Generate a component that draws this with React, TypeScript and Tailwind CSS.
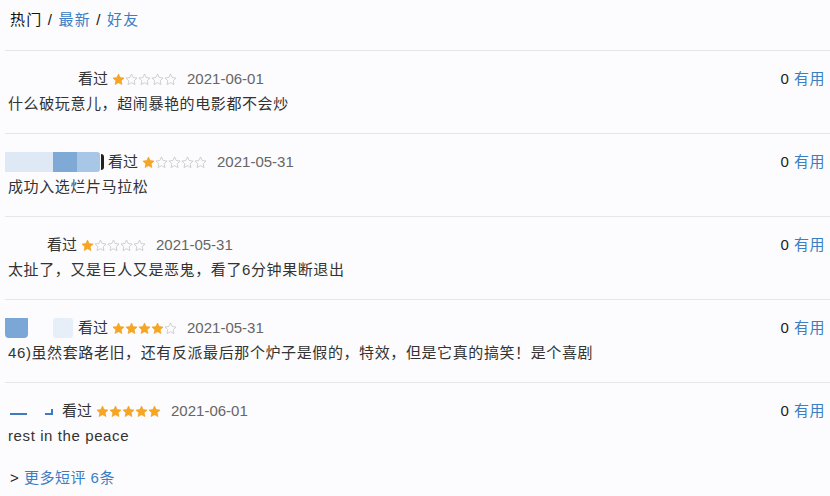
import React from "react";

const FONT = { fontFamily: '"Liberation Sans", "Noto Sans CJK SC", sans-serif' };

function Star({ filled }: { filled: boolean }) {
  return (
    <svg width="13" height="13" viewBox="0 0 24 24" className="shrink-0">
      <path
        d="M12 1.8l3.1 6.6 7.2.9-5.3 5 1.4 7.1L12 17.9l-6.4 3.5 1.4-7.1-5.3-5 7.2-.9z"
        fill={filled ? "#f6a623" : "none"}
        stroke={filled ? "#f19a12" : "#c9c9c9"}
        strokeWidth={filled ? 1 : 1.6}
        strokeLinejoin="round"
      />
    </svg>
  );
}

function Stars({ n }: { n: number }) {
  return (
    <span className="flex items-center">
      {[0, 1, 2, 3, 4].map((i) => (
        <Star key={i} filled={i < n} />
      ))}
    </span>
  );
}

type Row = {
  name: React.ReactNode;
  stars: number;
  date: string;
  text: string;
};

const rows: Row[] = [
  {
    name: <span className="w-[73px]" />,
    stars: 1,
    date: "2021-06-01",
    text: "什么破玩意儿，超闹暴艳的电影都不会炒",
  },
  {
    name: (
      <span className="flex items-center w-[103px] h-[20px]">
        <span className="w-[48px] h-[20px] bg-[#dfe9f5]" />
        <span className="w-[24px] h-[20px] bg-[#7faad6]" />
        <span className="w-[23px] h-[20px] bg-[#a8c7e6] rounded-r-[3px]" />
        <span className="w-[3px] h-[16px] bg-[#222] rounded-r-full ml-[1px]" />
      </span>
    ),
    stars: 1,
    date: "2021-05-31",
    text: "成功入选烂片马拉松",
  },
  {
    name: <span className="w-[42px]" />,
    stars: 1,
    date: "2021-05-31",
    text: "太扯了，又是巨人又是恶鬼，看了6分钟果断退出",
  },
  {
    name: (
      <span className="flex items-center w-[73px] h-[20px]">
        <span className="w-[23px] h-[20px] bg-[#7ba7d6] rounded-b-[4px]" />
        <span className="w-[25px]" />
        <span className="w-[20px] h-[20px] bg-[#e6eef8] rounded-[3px]" />
      </span>
    ),
    stars: 4,
    date: "2021-05-31",
    text: "46)虽然套路老旧，还有反派最后那个炉子是假的，特效，但是它真的搞笑！是个喜剧",
  },
  {
    name: (
      <span className="relative w-[57px] h-[20px]">
        <span className="absolute left-[5px] top-[12px] w-[17px] h-[2px] bg-[#3f7bc0]" />
        <span className="absolute left-[40px] top-[12px] w-[8px] h-[2px] bg-[#3f7bc0]" />
        <span className="absolute left-[46px] top-[8px] w-[2px] h-[6px] bg-[#3f7bc0]" />
      </span>
    ),
    stars: 5,
    date: "2021-06-01",
    text: "rest in the peace",
  },
];

export default function App() {
  return (
    <div
      className="w-[830px] h-[496px] bg-[#fcfbfd] text-[#333] overflow-hidden"
      style={FONT}
    >
      <div className="h-[50px] pl-[10px] pt-[9px] text-[15px] leading-[22px] tracking-[1.2px]">
        <span className="text-[#111]">热门</span>
        <span className="text-[#111]"> / </span>
        <span className="text-[#3a7ec4]">最新</span>
        <span className="text-[#111]"> / </span>
        <span className="text-[#3a7ec4]">好友</span>
      </div>
      {rows.map((r, i) => (
        <div
          key={i}
          className="ml-[5px] h-[83px] border-t border-[#e6e5e8] pt-[18px] pr-[5px]"
        >
          <div className="flex items-center justify-between h-[20px]">
            <div className="flex items-center text-[15px] leading-[20px]">
              {r.name}
              <span className="text-[#333] mr-[4px]">看过</span>
              <Stars n={r.stars} />
              <span className="ml-[10px] text-[#666]">{r.date}</span>
            </div>
            <div className="text-[15px] leading-[20px] tracking-[0.5px]">
              <span className="text-[#222]">0 </span>
              <span className="text-[#3a7ec4]">有用</span>
            </div>
          </div>
          <div className="mt-[5px] pl-[3px] text-[15px] leading-[20px] tracking-[0.6px] text-[#333]">
            {r.text}
          </div>
        </div>
      ))}
      <div className="pl-[10px] pt-[2px] text-[15px] leading-[22px] tracking-[0.5px]">
        <span className="text-[#222]">&gt; </span>
        <span className="text-[#3a7ec4]">更多短评 6条</span>
      </div>
    </div>
  );
}
